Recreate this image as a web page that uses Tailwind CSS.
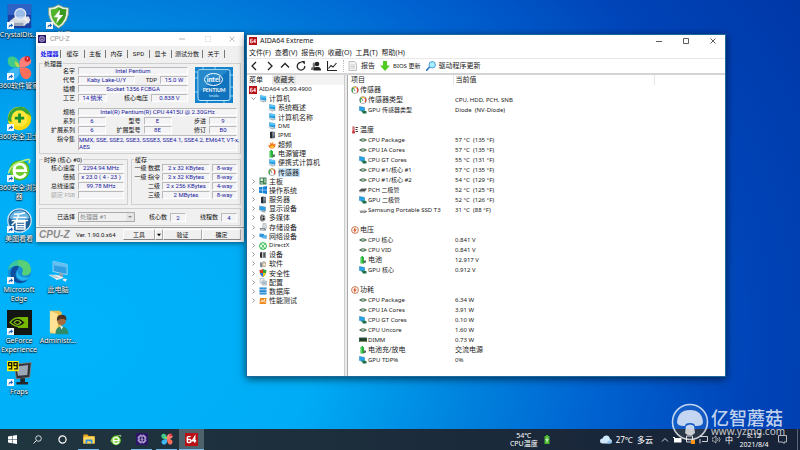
<!DOCTYPE html>
<html lang="zh-CN">
<head>
<meta charset="utf-8">
<meta name="viewport" content="width=device-width, initial-scale=1">
<title>Desktop</title>
<script src="https://cdn.jsdelivr.net/npm/@tailwindcss/browser@4"></script>
</head>
<body class="flex min-h-screen flex-col overflow-hidden bg-[#0050c0] bg-[radial-gradient(ellipse_105%_150%_at_8%_75%,#00b4fb_0%,#00acf5_30%,#0088e0_46%,#0062d0_64%,#0044b8_82%,#0038a8_100%)] font-['Noto_Sans','Noto_Sans_CJK_SC',sans-serif] text-[6px] leading-[10px] text-[#222]">

<svg class="hidden" aria-hidden="true">
  <symbol id="aida" viewBox="0 0 16 16"><rect width="16" height="16" fill="#b80f14"/><path d="M7 4.500H4.200Q2.800 4.500 2.800 6v4.500q0 1.200 1.200 1.200h2q1.200 0 1.200-1.200V9q0-1-1.200-1H3M12 12V4.500L9 9.500h4.800" fill="none" stroke="#fff" stroke-width="1.700"/></symbol>
  <symbol id="pc" viewBox="0 0 16 16"><path d="M3 1l11 2v8L3 9z" fill="#27a3e8" stroke="#1878b8" stroke-width=".8"/><path d="M3 1l11 2v3L3 5z" fill="#5fc8f8"/><path d="M0 11l8-1 8 3-7 2z" fill="#a9b6bf"/><path d="M2 11.500l6-.8 4 2" stroke="#e8eef2" fill="none"/></symbol>
  <symbol id="mon" viewBox="0 0 16 16"><path d="M1 2l12 2v8L1 10z" fill="#2a9fe6" stroke="#6a8ba0"/><path d="M5 12l8 1v2l-8-1z" fill="#8e9ba3"/></symbol>
  <symbol id="gauge" viewBox="0 0 16 16"><circle cx="8" cy="8" r="7" fill="#fff" stroke="#555" stroke-width="1"/><path d="M4 12A5.500 5.500 0 0 1 5 3.500" fill="none" stroke="#30a83a" stroke-width="2.200"/><path d="M5 3.500A5.500 5.500 0 0 1 11 3.500" fill="none" stroke="#e7c42a" stroke-width="2.200"/><path d="M11 3.500A5.500 5.500 0 0 1 12 12" fill="none" stroke="#e23a28" stroke-width="2.200"/><path d="M8 10L5 4" stroke="#333" stroke-width="1.300"/></symbol>
  <symbol id="chip" viewBox="0 0 16 16"><path d="M0 8q8-7 16 0-8 7-16 0z" fill="#3f6b49"/><path d="M4 7.800q4-3 8 0-4 2.600-8 0z" fill="#e9efe6"/></symbol>
  <symbol id="gpu" viewBox="0 0 16 16"><path d="M1 1l10 2v8L1 9z" fill="#27a3e8" stroke="#1b74ae"/><path d="M4 9l11 1v5H8z" fill="#2d7a56"/><circle cx="11" cy="12.500" r="2" fill="#163"/></symbol>
  <symbol id="server" viewBox="0 0 16 16"><path d="M4 2l4-1v14l-4-1z" fill="#252b33"/><path d="M8 1l6 1v12l-6 1z" fill="#5d6873"/><path d="M9 4h4M9 6h4M9 8h4" stroke="#b8c3cc"/></symbol>
  <symbol id="flame" viewBox="0 0 16 16"><path d="M8 15C2 15 1 11 1 7l3 2 1-7 3 4 2-5 1 6 4-2c0 5-1 10-7 10z" fill="#f07818"/><path d="M8 14c-3 0-4-2-3-4l2 1 1-3 2 3 2-1c0 3-1 4-4 4z" fill="#ffd23a"/></symbol>
  <symbol id="batt" viewBox="0 0 16 16"><path d="M5 0h3v2h2v13H3V2h2z" fill="#27b53a"/><path d="M5 3v11" stroke="#8df08a"/><path d="M9 9h5v4l-5 2z" fill="#5b6a60"/></symbol>
  <symbol id="board" viewBox="0 0 16 16"><path d="M1 1h14v14H1z" fill="#3c8052"/><path d="M3 3h5v5H3zM10 3h1v9h-1zM12.500 3h1v9h-1zM3 10h5v1H3zM3 12h5v1H3z" fill="#dcebdc"/></symbol>
  <symbol id="win" viewBox="0 0 16 16"><path d="M0 2.500L7 1.500v6H0zM8 1.300L16 0v7.500H8zM0 8.500h7v6l-7-1zM8 8.500h8V16l-8-1.300z" fill="currentColor"/></symbol>
  <symbol id="media" viewBox="0 0 16 16"><ellipse cx="7" cy="8" rx="5" ry="7" fill="#666"/><ellipse cx="9" cy="8" rx="4" ry="6" fill="#aaa"/><circle cx="9" cy="5" r="1.600" fill="#333"/><circle cx="9" cy="10" r="2.400" fill="#333"/></symbol>
  <symbol id="disk" viewBox="0 0 16 16"><path d="M8 1h6l1 9-8 1z" fill="#d5dadd" stroke="#9aa3a8"/><path d="M1 10h11l2 2v3H3z" fill="#868f94"/><path d="M4 13h6" stroke="#eee"/></symbol>
  <symbol id="net" viewBox="0 0 16 16"><path d="M1 3l9 1v7l-9-1z" fill="#2995dc"/><path d="M7 6l8 1v6l-8-1z" fill="#53b8f0" stroke="#2b7fb8" stroke-width=".7"/></symbol>
  <symbol id="dx" viewBox="0 0 16 16"><circle cx="8" cy="8" r="6.800" fill="#fff" stroke="#17b437" stroke-width="2"/><path d="M3 3q5 3 9 11M13 3q-5 3-9 11" fill="none" stroke="#17b437" stroke-width="1.600"/></symbol>
  <symbol id="dev" viewBox="0 0 16 16"><path d="M2 3l4-1v12l-4-1z" fill="#333"/><path d="M7 2h7v12H7z" fill="#8b949a"/><path d="M9 4h3v8H9z" fill="#555"/></symbol>
  <symbol id="soft" viewBox="0 0 16 16"><path d="M2 5l8-3 4 2v9l-8 2-4-2z" fill="#b7bec4"/><path d="M2 5l4 2v8l-4-2z" fill="#7f898f"/><circle cx="10.500" cy="9" r="3" fill="#f3f3f3" stroke="#d8842c"/></symbol>
  <symbol id="shield" viewBox="0 0 16 16"><path d="M8 0q3 2 7 2 0 9-7 14z" fill="#2fa53a"/><path d="M8 0Q5 2 1 2q0 9 7 14z" fill="#dd3a22"/><path d="M8 8H1.700Q3 13 8 16z" fill="#2277d8"/><path d="M8 8h6.300Q13 13 8 16z" fill="#f4c81e"/></symbol>
  <symbol id="cfg" viewBox="0 0 16 16"><path d="M2 1h8v9H2z" fill="#eef2f5" stroke="#8ba0ae"/><path d="M6 6h9v8H6z" fill="#d4dfe6" stroke="#7b90a0"/><path d="M8 9h5M8 11h5" stroke="#70899b"/></symbol>
  <symbol id="db" viewBox="0 0 16 16"><path d="M1 1h14v4H1zM1 6h14v4H1zM1 11h14v4H1z" fill="#2385d0"/><path d="M1 2h14M1 7h14M1 12h14" stroke="#6cbcf0"/></symbol>
  <symbol id="perf" viewBox="0 0 16 16"><path d="M2 2h13l-1 12H1z" fill="#f08a1c"/><path d="M4 11l2-5 2 4 3-6 1 7" fill="none" stroke="#fff" stroke-width="1.400"/></symbol>
  <symbol id="temp" viewBox="0 0 16 16"><path d="M3 1h4v9q2 2 0 5H3q-2-3 0-5z" fill="#c33030"/><path d="M4.500 2v7" stroke="#fff"/><path d="M9 2h5v2H9zM9 6h4v2H9zM9 10h5v2H9z" fill="#444"/></symbol>
  <symbol id="volt" viewBox="0 0 16 16"><circle cx="8" cy="8" r="6.800" fill="#fff" stroke="#b35a2c" stroke-width="1.600"/><path d="M9 2L4 9h3l-1 5 6-7H8.500z" fill="#e1511b"/></symbol>
  <symbol id="pch" viewBox="0 0 16 16"><path d="M0 9l5-4h11l-4 6H1z" fill="#4e5552"/><path d="M2 11v2M5 11v2M8 11v2M11 11v2" stroke="#777"/></symbol>
  <symbol id="ssd" viewBox="0 0 16 16"><path d="M0 8l13-1 3 3-2 3H3z" fill="#d0d4d6"/><path d="M2 12h12l1-2" stroke="#444" stroke-width="1.800" fill="none"/></symbol>
  <symbol id="dimm" viewBox="0 0 16 16"><path d="M0 3h16v9H0z" fill="#2e5f47"/><path d="M2 5h3v4H2zM6.500 5h3v4h-3zM11 5h3v4h-3z" fill="#18271f"/><path d="M1 11h14" stroke="#c8b96a"/></symbol>
  <symbol id="link" viewBox="0 0 8 8"><path d="M0 0h8v8H0z" fill="#f4f8fc"/><path d="M2 6.800q-.5-3.500 2.500-3.600V1.500L7 4 4.500 6V4.700Q3 4.600 2 6.800z" fill="#1560b8"/></symbol>
  <symbol id="e360" viewBox="0 0 32 32"><circle cx="16" cy="17" r="13" fill="#4fae1a"/><circle cx="16" cy="17" r="12" fill="#72cc30"/><path d="M24 21q-3 5-8 5-7-1-7-9t7-8q8 0 8 8.500H10" fill="none" stroke="#fff" stroke-width="3.600"/><path d="M2 21Q4 8 28 3q2 1 0 5" fill="none" stroke="#b8ee84" stroke-width="2"/></symbol>
  <symbol id="petal" viewBox="0 0 32 32"><path d="M16 16H8Q0 14 1 6q1-5 7-4 8 2 8 14z" fill="#3fc98b"/><path d="M16 16V8q2-6 8-6 7 1 7 7-2 7-15 7z" fill="#ff8078"/><path d="M16 16h8q7 2 7 8-1 7-7 7-8-2-8-15z" fill="#ff6e58"/><path d="M16 16v8q-2 7-8 7-7-1-7-7 2-8 15-8z" fill="#3db7f5"/><path d="M10 8q6 2 6 8-6 0-6-8z" fill="#b7d94d"/><circle cx="26" cy="5" r="3.600" fill="#d3262f"/><path d="M26 3v2.500" stroke="#fff"/></symbol>
  <symbol id="cpuz" viewBox="0 0 16 16"><path d="M0 0h16v16H0z" fill="#2d1668"/><path d="M4 4h8v8H4z" fill="none" stroke="#e7dcff" stroke-width="1.300"/><path d="M6 2v2M8 2v2M10 2v2M6 12v2M8 12v2M10 12v2M2 6h2M2 8h2M2 10h2M12 6h2M12 8h2M12 10h2" stroke="#c7b4f4" stroke-width=".8"/><path d="M8 5.500v4M6.500 8.500L8 10l1.500-1.500" stroke="#fff" fill="none"/></symbol>
  <symbol id="crystal" viewBox="0 0 32 32"><path d="M1 0h30v31H1z" fill="#1d3f9f"/><path d="M1 0h30v14H1z" fill="#2e62c4"/><path d="M3 22l8-6h17l2 5-8 7H5z" fill="#d9dde4"/><path d="M4 24h17v4H6z" fill="#9ea7b5"/><circle cx="17" cy="13" r="7" fill="#b5d3f5" fill-opacity=".8" stroke="#e7edf5" stroke-width="1.500"/><path d="M22 18l6 6" stroke="#eee" stroke-width="2.500"/></symbol>
  <symbol id="guard" viewBox="0 0 32 32"><path d="M16 1q6 4 13 4 1 18-13 26Q2 23 3 5q7 0 13-4z" fill="#e8efe4" stroke="#7d9a72"/><path d="M16 4q5 3 10 3 0 15-10 21Q6 22 6 7q5 0 10-3z" fill="#53b52b"/><path d="M16 4v24q10-6 10-21-5 0-10-3z" fill="#3c9a20"/><path d="M18 7l-8 10h5l-2 8 9-11h-5z" fill="#fff"/></symbol>
  <symbol id="plus" viewBox="0 0 32 32"><circle cx="16" cy="16" r="15" fill="#f6d90c"/><path d="M1 18Q2 2 18 1q10 1 13 13-6-7-14-3-5 3-8 8-5 3-8-1z" fill="#35a53a"/><circle cx="16" cy="16" r="10.500" fill="#ffe63b"/><path d="M16 9.500v12M10 15.500h12" stroke="#17902e" stroke-width="3.600"/></symbol>
  <symbol id="look" viewBox="0 0 32 32"><circle cx="16" cy="16" r="15" fill="#1d5e96" stroke="#cfe9fa" stroke-width="1.600"/><path d="M3 13Q7 3 16 3t13 10q-13 5-26 0z" fill="#67b5e2"/><path d="M9 8q8 0 14-2M8 12h17M6 16h21M15 7q-1 9-9 15M12 18h11v9H12zM12 21h11M12 24h11" fill="none" stroke="#fff" stroke-width="1.900"/></symbol>
  <symbol id="edge" viewBox="0 0 32 32"><circle cx="16" cy="16" r="15" fill="#168fd8"/><path d="M1 15Q3 1 17 1q14 2 14 14-2 7-10 6-3-1-1-4 2-7-6-8Q4 9 1 15z" fill="#39c6a0"/><path d="M14 1q16-1 17 13-1 7-9 7-4-1-2-4 2-7-6-9z" fill="#62d36a" fill-opacity=".75"/><path d="M14 13q-5 4-2 11 5 7 15 3-7 6-15 3-12-7-5-19 3-3 8-2z" fill="#0d4f9e"/><path d="M15 13q-3 4 1 8 5 4 13 2-4 5-10 4-7-1-7-8 0-4 3-6z" fill="#29b5ef"/></symbol>
  <symbol id="thispc" viewBox="0 0 32 32"><path d="M9 3l18 4v13L9 16z" fill="#2f9fe3" stroke="#bfe4f8"/><path d="M9 3l18 4v4L9 8z" fill="#63bff0"/><path d="M17 18l5 1v4h-6z" fill="#8ba0ad"/><path d="M3 20l11 0 9 4-9 3z" fill="#edf4f8"/><path d="M6 21l8 1M8 23l9 1" stroke="#9cb2bf"/><path d="M23 25l4 1-2 3-4-2z" fill="#e8eef1"/></symbol>
  <symbol id="user" viewBox="0 0 32 32"><path d="M5 1h12l3 2v27H5z" fill="#e8bf55"/><path d="M5 1l10 4v26L5 28z" fill="#ffe294"/><circle cx="20" cy="14" r="5.500" fill="#a26c43"/><path d="M14 14q-1-8 6-8t6 7q-6-3-9-1z" fill="#4b3222"/><path d="M12 31q0-10 8-10t9 10z" fill="#2e8b6c"/><path d="M18 21l2 4 2-4z" fill="#fff"/></symbol>
  <symbol id="nv" viewBox="0 0 32 32"><path d="M0 0h32v32H0z" fill="#141614"/><path d="M14 9h13v14H14z" fill="#76b900"/><path d="M4 16q7-9 15-4 4 3 5 4-9 10-20 0z" fill="#141614" stroke="#76b900" stroke-width="2"/><path d="M9 16q4-5 9 0-5 5-9 0z" fill="#141614" stroke="#8fd01c" stroke-width="1.400"/></symbol>
  <symbol id="fraps" viewBox="0 0 32 32"><path d="M9 4l22-2-2 19-17 2z" fill="#30343a" stroke="#888"/><path d="M12 7l15-2-1 13-12 1z" fill="#9ba8b5"/><path d="M17 22h6v5h4v3H12v-3h5z" fill="#25282c"/><path d="M0 0h15v13H0z" fill="#ffef10"/><path d="M6 9V2H2v4h4M13 9V2H9v4h4M2 10h4v-4M9 10h4v-4" fill="none" stroke="#151500" stroke-width="1.700"/></symbol>
  <symbol id="folder" viewBox="0 0 32 32"><path d="M1 4h11l3 4h16v20H1z" fill="#e9a91f"/><path d="M1 10h30v18H1z" fill="#ffd75e"/><path d="M7 28v-9q0-2 2-2h14q2 0 2 2v9h-4v-6H11v6z" fill="#2f8fe0"/></symbol>
</svg>

<main class="relative flex-1">
  <ul id="icons" aria-label="桌面" class="grid w-[78px] auto-rows-[51px] grid-cols-[38px_40px] pt-[4px] text-[7px] leading-[9px] text-white [text-shadow:0_1px_1px_#000,0_0_2px_#000]"></ul>

  <!-- CPU-Z -->
  <section aria-label="CPU-Z" class="absolute left-[36px] top-[32px] flex w-[208px] flex-col bg-[#f0f0f0] px-[3px] pb-px font-['Roboto','Noto_Sans_CJK_SC',sans-serif] text-[6px] leading-[8px] text-[#111] shadow-[0_1px_5px_#0008]">
    <header class="-mx-[3px] flex h-[14px] items-center gap-[4px] bg-white px-[2px]">
      <svg class="size-[8px]"><use href="#cpuz"/></svg>
      <h1 class="flex-1 text-[7px] text-[#999]">CPU-Z</h1>
      <button aria-label="最小化" class="w-[25px]"><svg class="mx-auto size-[6px]" viewBox="0 0 6 6"><path d="M0 3h6" stroke="#999" stroke-width=".7"/></svg></button>
      <button aria-label="最大化" class="w-[20px]"><svg class="mx-auto size-[6px]" viewBox="0 0 6 6"><path d="M.5.5h5v5h-5z" fill="none" stroke="#ddd" stroke-width=".7"/></svg></button>
      <button aria-label="关闭" class="w-[20px]"><svg class="mx-auto size-[6px]" viewBox="0 0 6 6"><path d="M.5.5l5 5M5.500.5l-5 5" stroke="#999" stroke-width=".7"/></svg></button>
    </header>
    <nav class="flex h-[13px] items-center pt-[2px] text-center">
      <button class="w-[22px] border-r border-[#777] font-bold text-[#1c1cf0]">处理器</button>
      <button class="w-[24px] border-r border-[#777]">缓存</button>
      <button class="w-[21px] border-r border-[#777]">主板</button>
      <button class="w-[22px] border-r border-[#777]">内存</button>
      <button class="w-[22px] border-r border-[#777]">SPD</button>
      <button class="w-[22px] border-r border-[#777]">显卡</button>
      <button class="w-[31px] border-r border-[#777]">测试分数</button>
      <button class="w-[22px] border-r border-[#777]">关于</button>
    </nav>
    <fieldset class="mt-px flex min-w-0 flex-col gap-px border border-[#d0d0d0] pb-[2px] pl-px pr-[3px]">
      <legend class="ml-[2px] h-[7px] px-px leading-[7px]">处理器</legend>
      <div class="flex gap-[7px]">
        <div class="flex flex-1 flex-col gap-px">
          <div class="flex gap-[3px]"><span class="w-[34px] text-right">名字</span><output class="flex-1 border border-[#bbb] border-b-white border-r-white bg-[#f4f4f6] text-center leading-[6px] text-[#2222a0]">Intel Pentium</output></div>
          <div class="flex gap-[3px]"><span class="w-[34px] text-right">代号</span><output class="flex-1 border border-[#bbb] border-b-white border-r-white bg-[#f4f4f6] text-center leading-[6px] text-[#2222a0]">Kaby Lake-U/Y</output><span class="w-[19px] text-right">TDP</span><output class="w-[28px] border border-[#bbb] border-b-white border-r-white bg-[#f4f4f6] text-center leading-[6px] text-[#2222a0]">15.0 W</output></div>
          <div class="flex gap-[3px]"><span class="w-[34px] text-right">插槽</span><output class="flex-1 border border-[#bbb] border-b-white border-r-white bg-[#f4f4f6] text-center leading-[6px] text-[#2222a0]">Socket 1356 FCBGA</output></div>
          <div class="flex gap-[3px]"><span class="w-[34px] text-right">工艺</span><output class="w-[29px] border border-[#bbb] border-b-white border-r-white bg-[#f4f4f6] text-center leading-[6px] text-[#2222a0]">14 纳米</output><span class="flex-1 text-right">核心电压</span><output class="w-[37px] border border-[#bbb] border-b-white border-r-white bg-[#f4f4f6] text-center leading-[6px] text-[#2222a0]">0.838 V</output></div>
        </div>
        <svg class="mr-[4px] h-[36px] w-[38px]" viewBox="0 0 38 36" role="img" aria-label="Intel Pentium inside">
          <rect width="38" height="36" fill="#1483cc"/><path d="M0 5h3M0 11h3M0 25h3M35 8h3M35 20h3M35 29h3M8 0v2M20 0v2M29 34v2M12 34v2" stroke="#7fd0f5"/>
          <rect x="3" y="2.500" width="32" height="31" rx="2" fill="#1173bd" stroke="#c0e8fa"/><path d="M3 2.500h32L3 26z" fill="#3aa0dc" fill-opacity=".5"/>
          <ellipse cx="18.500" cy="12.500" rx="9" ry="6" fill="none" stroke="#fff"/><text x="18.500" y="15" text-anchor="middle" font-size="7" font-weight="bold" fill="#fff" font-family="Lato,sans-serif">intel</text>
          <text x="19" y="25" text-anchor="middle" font-size="5" font-weight="bold" fill="#fff" font-family="Lato,sans-serif">PENTIUM</text><text x="19" y="30" text-anchor="middle" font-size="4" fill="#cdeafd" font-family="Lato,sans-serif">inside</text>
        </svg>
      </div>
      <div class="mt-[4px] flex gap-[3px]"><span class="w-[34px] text-right">规格</span><output class="flex-1 border border-[#bbb] border-b-white border-r-white bg-[#f4f4f6] text-center leading-[6px] text-[#2222a0]">Intel(R) Pentium(R) CPU 4415U @ 2.30GHz</output></div>
      <div class="flex gap-[3px]"><span class="w-[34px] text-right">系列</span><output class="w-[28px] border border-[#bbb] border-b-white border-r-white bg-[#f4f4f6] text-center leading-[6px] text-[#2222a0]">6</output><span class="flex-1 text-right">型号</span><output class="w-[28px] border border-[#bbb] border-b-white border-r-white bg-[#f4f4f6] text-center leading-[6px] text-[#2222a0]">E</output><span class="flex-1 text-right">步进</span><output class="w-[28px] border border-[#bbb] border-b-white border-r-white bg-[#f4f4f6] text-center leading-[6px] text-[#2222a0]">9</output></div>
      <div class="flex gap-[3px]"><span class="w-[34px] text-right">扩展系列</span><output class="w-[28px] border border-[#bbb] border-b-white border-r-white bg-[#f4f4f6] text-center leading-[6px] text-[#2222a0]">6</output><span class="flex-1 text-right">扩展型号</span><output class="w-[28px] border border-[#bbb] border-b-white border-r-white bg-[#f4f4f6] text-center leading-[6px] text-[#2222a0]">8E</output><span class="flex-1 text-right">修订</span><output class="w-[28px] border border-[#bbb] border-b-white border-r-white bg-[#f4f4f6] text-center leading-[6px] text-[#2222a0]">B0</output></div>
      <div class="flex gap-[3px]"><span class="w-[34px] shrink-0 text-right">指令集</span><output class="h-[16px] min-w-0 flex-1 whitespace-nowrap border border-[#bbb] border-b-white border-r-white bg-[#f4f4f6] leading-[7px] text-[#2222a0]">MMX, SSE, SSE2, SSE3, SSSE3, SSE4.1, SSE4.2, EM64T, VT-x,<br>AES</output></div>
    </fieldset>
    <div class="mt-[2px] flex gap-[3px]">
      <fieldset class="flex w-[89px] flex-col gap-px border border-[#d0d0d0] pb-[5px] pl-px pr-[3px] pt-px">
        <legend class="ml-[2px] h-[7px] px-px leading-[7px]">时钟 (核心 #0)</legend>
        <div class="flex gap-[3px]"><span class="w-[34px] text-right">核心速度</span><output class="flex-1 border border-[#bbb] border-b-white border-r-white bg-[#f4f4f6] text-center leading-[6px] text-[#2222a0]">2294.94 MHz</output></div>
        <div class="flex gap-[3px]"><span class="w-[34px] text-right">倍频</span><output class="flex-1 border border-[#bbb] border-b-white border-r-white bg-[#f4f4f6] text-center leading-[6px] text-[#2222a0]">x 23.0 ( 4 - 23 )</output></div>
        <div class="flex gap-[3px]"><span class="w-[34px] text-right">总线速度</span><output class="flex-1 border border-[#bbb] border-b-white border-r-white bg-[#f4f4f6] text-center leading-[6px] text-[#2222a0]">99.78 MHz</output></div>
        <div class="flex gap-[3px]"><span class="w-[34px] text-right text-[#aaa]">额定 FSB</span><output class="flex-1 border border-[#bbb] border-b-white border-r-white bg-[#f4f4f6]"></output></div>
      </fieldset>
      <fieldset class="flex flex-1 flex-col gap-px border border-[#d0d0d0] pb-[5px] pr-[3px] pt-px">
        <legend class="ml-[2px] h-[7px] px-px leading-[7px]">缓存</legend>
        <div class="flex gap-[2px]"><span class="flex-1 text-right">一级 数据</span><output class="w-[48px] border border-[#bbb] border-b-white border-r-white bg-[#f4f4f6] text-center leading-[6px] text-[#2222a0]">2 x 32 KBytes</output><output class="w-[25px] border border-[#bbb] border-b-white border-r-white bg-[#f4f4f6] text-center leading-[6px] text-[#2222a0]">8-way</output></div>
        <div class="flex gap-[2px]"><span class="flex-1 text-right">一级 指令</span><output class="w-[48px] border border-[#bbb] border-b-white border-r-white bg-[#f4f4f6] text-center leading-[6px] text-[#2222a0]">2 x 32 KBytes</output><output class="w-[25px] border border-[#bbb] border-b-white border-r-white bg-[#f4f4f6] text-center leading-[6px] text-[#2222a0]">8-way</output></div>
        <div class="flex gap-[2px]"><span class="flex-1 text-right">二级</span><output class="w-[48px] border border-[#bbb] border-b-white border-r-white bg-[#f4f4f6] text-center leading-[6px] text-[#2222a0]">2 x 256 KBytes</output><output class="w-[25px] border border-[#bbb] border-b-white border-r-white bg-[#f4f4f6] text-center leading-[6px] text-[#2222a0]">4-way</output></div>
        <div class="flex gap-[2px]"><span class="flex-1 text-right">三级</span><output class="w-[48px] border border-[#bbb] border-b-white border-r-white bg-[#f4f4f6] text-center leading-[6px] text-[#2222a0]">2 MBytes</output><output class="w-[25px] border border-[#bbb] border-b-white border-r-white bg-[#f4f4f6] text-center leading-[6px] text-[#2222a0]">8-way</output></div>
      </fieldset>
    </div>
    <div class="mt-[3px] flex h-[18px] items-center gap-[3px] border border-[#d0d0d0] pl-px pr-[3px]">
      <label for="sel" class="w-[34px] text-right">已选择</label>
      <div class="relative w-[57px]">
        <select id="sel" disabled class="block h-[10px] w-full appearance-none border border-[#aaa] bg-[#f0f0f0] pl-px text-[6px] leading-[8px] text-[#888] opacity-100"><option>处理器 #1</option></select>
        <svg class="pointer-events-none absolute right-px top-px h-[8px] w-[8px] bg-[#e4e4e4]" viewBox="0 0 8 8"><path d="M2 3h4L4 5z" fill="#888"/></svg>
      </div>
      <span class="flex-1 text-right">核心数</span><output class="w-[16px] border border-[#bbb] border-b-white border-r-white bg-[#f4f4f6] text-center leading-[7px] text-[#2222a0]">2</output>
      <span class="flex-1 text-right">线程数</span><output class="w-[16px] border border-[#bbb] border-b-white border-r-white bg-[#f4f4f6] text-center leading-[7px] text-[#2222a0]">4</output>
    </div>
    <footer class="-mx-[3px] mt-px flex h-[14px] items-center border-t border-[#999] px-[3px]">
      <strong class="w-[37px] font-['Liberation_Sans',sans-serif] text-[10px] italic text-[#8a8a8a]">CPU-Z</strong>
      <span class="flex-1">Ver. 1.90.0.x64</span>
      <button class="h-[11px] w-[32px] border border-white border-b-[#888] border-r-[#aaa]">工具</button>
      <button aria-label="工具菜单" class="h-[11px] w-[8px] border border-white border-b-[#888] border-r-[#aaa]"><svg class="mx-auto size-[4px]" viewBox="0 0 5 5"><path d="M0 1h5L2.500 4z"/></svg></button>
      <button class="h-[11px] w-[39px] border border-white border-b-[#888] border-r-[#aaa]">验证</button>
      <button class="h-[11px] w-[39px] border border-white border-b-[#888] border-r-[#aaa]">确定</button>
    </footer>
  </section>

  <!-- AIDA64 -->
  <section aria-label="AIDA64 Extreme" class="absolute left-[246px] top-[34px] flex h-[343px] w-[480px] flex-col border border-[#1c6a9c] bg-white shadow-[0_2px_8px_#0009]">
    <header class="flex h-[12px] items-center gap-[3px] pl-[2px]">
      <svg class="size-[8px]"><use href="#aida"/></svg>
      <h1 class="flex-1 text-[7px]">AIDA64 Extreme</h1>
      <button aria-label="最小化" class="w-[24px]"><svg class="mx-auto size-[6px]" viewBox="0 0 6 6"><path d="M0 3.500h6" stroke="#333" stroke-width=".8"/></svg></button>
      <button aria-label="最大化" class="w-[24px]"><svg class="mx-auto size-[6px]" viewBox="0 0 6 6"><path d="M.5.500h5v5h-5z" fill="none" stroke="#333" stroke-width=".8"/></svg></button>
      <button aria-label="关闭" class="w-[24px]"><svg class="mx-auto size-[6px]" viewBox="0 0 6 6"><path d="M.5.5l5 5M5.500.5l-5 5" stroke="#333" stroke-width=".8"/></svg></button>
    </header>
    <nav class="flex h-[11px] items-center gap-[4px] pl-[2px] text-[7px]">
      <button>文件(F)</button><button>查看(V)</button><button>报告(R)</button><button>收藏(O)</button><button>工具(T)</button><button>帮助(H)</button>
    </nav>
    <div class="flex h-[17px] items-center border-b-2 border-t border-b-[#d4d4d4] border-t-[#e8e8e8] pl-[2px]">
      <div class="flex w-[88px] justify-between">
        <button aria-label="后退"><svg class="size-[10px]" viewBox="0 0 10 10"><path d="M7 1L3 5l4 4" fill="none" stroke="#222" stroke-width="1.300"/></svg></button>
        <button aria-label="前进"><svg class="size-[10px]" viewBox="0 0 10 10"><path d="M3 1l4 4-4 4" fill="none" stroke="#222" stroke-width="1.300"/></svg></button>
        <button aria-label="向上"><svg class="size-[10px]" viewBox="0 0 10 10"><path d="M1 6.500l4-4 4 4" fill="none" stroke="#222" stroke-width="1.300"/></svg></button>
        <button aria-label="刷新"><svg class="size-[10px]" viewBox="0 0 10 10"><path d="M5.500 1.500A3.800 3.800 0 1 0 8.800 5" fill="none" stroke="#222" stroke-width="1.300"/><path d="M5 0h3.800v3.500z" fill="#222"/></svg></button>
        <button aria-label="用户"><svg class="size-[10px]" viewBox="0 0 10 10"><path d="M0 8q0-2 2-2.500Q1 2 3 1.200L4 3v6H0z" fill="#777"/><circle cx="6" cy="3" r="2.300" fill="#222"/><path d="M2.500 9.500Q2.500 6 5 6h2q3 0 3 3.500z" fill="#222"/></svg></button>
        <button aria-label="图表"><svg class="size-[10px]" viewBox="0 0 10 10"><path d="M.5 0v9.500H10M1.500 7.500l2.500-3 2 1.500L9.500 2" fill="none" stroke="#222" stroke-width="1.100"/></svg></button>
      </div>
      <div class="ml-[6px] h-[12px] border-l border-dotted border-[#bbb]"></div>
      <button class="ml-[4px] flex items-center gap-[3px] text-[7px]"><svg class="size-[10px]" viewBox="0 0 10 10"><path d="M1 .5h5.500l2 2v7H1z" fill="#f2f2f2" stroke="#aaa" stroke-width=".7"/><path d="M2.500 4h4.500M2.500 5.500h4.500M2.500 7h4.500" stroke="#bbb" stroke-width=".6"/></svg>报告</button>
      <button class="ml-[5px] flex items-center gap-[3px]"><svg class="size-[10px]" viewBox="0 0 10 10"><path d="M3 0h4v4.500h3L5 10 0 4.500h3z" fill="#4fcb22"/></svg>BIOS 更新</button>
      <button class="ml-[6px] flex items-center gap-[2px] text-[7px]"><svg class="size-[10px]" viewBox="0 0 10 10"><path d="M0 10l4-4.500" stroke="#2e78c0" stroke-width="1.600"/><circle cx="6.200" cy="3.800" r="3.200" fill="#a9f0fc" stroke="#3b8fd8" stroke-width=".9"/></svg>驱动程序更新</button>
    </div>
    <div class="flex min-h-0 flex-1">
      <aside class="w-[98px] border-r border-[#ccc]">
        <div class="flex h-[10px] bg-[#f3f3f3] text-[7px]"><button class="w-[25px] bg-white pl-[2px] text-left">菜单</button><button class="w-[24px] bg-[#e9e9e9]">收藏夹</button></div>
        <ul id="tree" class="flex h-[220px] flex-col bg-white"></ul>
      </aside>
      <div class="w-[3px] border-r border-[#aaa] bg-[#ececec]"></div>
      <div class="flex-1">
        <table class="w-full table-fixed text-left">
          <thead class="text-[7px]"><tr class="h-[10px]"><th class="w-[105px] border-r border-[#e5e5e5] p-0 pl-[3px] font-normal">项目</th><th class="w-[201px] border-r border-[#e5e5e5] p-0 pl-[2px] font-normal">当前值</th><th aria-label="空" class="p-0"></th></tr></thead>
          <tbody id="rows"></tbody>
        </table>
      </div>
    </div>
  </section>

  <!-- site mark -->
  <div class="pointer-events-none absolute bottom-[-12px] right-[17px] z-10 flex items-center gap-[2px] text-white/75">
    <svg class="size-[38px]" viewBox="0 0 38 38"><circle cx="19" cy="19" r="17.500" fill="#fff" fill-opacity=".08" stroke="currentColor" stroke-width="1.600"/><path d="M6 19Q7 7 19 7t13 12q0 4-7 4h-1q0-3-5-3t-5 3h-1q-7 0-7-4z" fill="currentColor"/><path d="M15 23q4-3 8 0l1 7q-5 5-10 0z" fill="currentColor"/></svg>
    <div class="w-[72px]"><div class="whitespace-nowrap text-[18px] font-medium leading-[18px]">亿智蘑菇</div><div class="whitespace-nowrap text-[10px] leading-[9px]">www.yzmg.com</div></div>
  </div>
</main>

<footer class="flex h-[21px] items-center bg-gradient-to-r from-[#20363f] via-[#1c2c3c] to-[#172238] text-[7px] leading-[9px] text-white">
  <nav class="flex h-full">
    <button aria-label="开始" class="w-[25px]"><svg class="mx-auto size-[9px]"><use href="#win"/></svg></button>
    <button aria-label="搜索" class="w-[25px]"><svg class="mx-auto size-[9px]" viewBox="0 0 9 9"><circle cx="5.500" cy="3.500" r="2.800" fill="none" stroke="#fff" stroke-width=".8"/><path d="M3.500 5.500L.5 8.500" stroke="#fff" stroke-width=".9"/></svg></button>
    <button aria-label="Cortana" class="w-[25px]"><svg class="mx-auto size-[9px]" viewBox="0 0 9 9"><circle cx="4.500" cy="4.500" r="3.600" fill="none" stroke="#fff" stroke-width="1.200"/></svg></button>
    <button aria-label="文件资源管理器" class="mx-[3px] w-[21px] border-b border-[#76b9ed]"><svg class="mx-auto size-[12px]"><use href="#folder"/></svg></button>
    <button aria-label="360浏览器" class="mx-[3px] w-[21px]"><svg class="mx-auto size-[12px]"><use href="#e360"/></svg></button>
    <button aria-label="CPU-Z" class="mx-[2px] w-[21px] border-b border-[#76b9ed]"><svg class="mx-auto size-[12px]"><use href="#cpuz"/></svg></button>
    <button aria-label="360软件管家" class="mx-[2px] w-[21px] border-b border-[#76b9ed]"><svg class="mx-auto size-[12px]"><use href="#petal"/></svg></button>
    <button aria-label="AIDA64" class="w-[25px] border-b border-[#76b9ed] bg-[#4d626b]"><svg class="mx-auto size-[13px]"><use href="#aida"/></svg></button>
  </nav>
  <div class="ml-auto flex items-center">
    <div class="text-center text-[7px] leading-[8px]">54℃<br>CPU温度</div>
    <svg class="ml-[6px] h-[9px] w-[6px]" viewBox="0 0 6 9"><path d="M2 0h2v1h1.500v8H.5V1H2z" fill="#48b82c"/><path d="M3 2.500v5M1.500 4L3 5.500 4.500 4" stroke="#fff" fill="none" stroke-width=".8"/></svg>
    <svg class="ml-[50px] h-[9px] w-[12px]" viewBox="0 0 12 9"><path d="M3 8.500Q0 8.500 0 6t2.500-2.500Q3.500.5 6.500.5T10 4q2 .3 2 2.200T10 8.500z" fill="#cfe8fb"/><path d="M6 8.500q3-4 6-2.500 0 2.500-2 2.500z" fill="#8fc4ee"/></svg>
    <span class="ml-[4px] text-[8px]">27℃&nbsp; 多云</span>
  </div>
  <div class="ml-[8px] flex items-center gap-[4px]">
    <svg class="size-[8px]" viewBox="0 0 8 8"><path d="M1 5.500l3-3 3 3" fill="none" stroke="#fff" stroke-width=".8"/></svg>
    <svg class="size-[9px]" viewBox="0 0 9 9"><path d="M1 3h7.500v4.500H1z" fill="#fff"/><path d="M0 2.500h2" stroke="#fff"/></svg>
    <svg class="size-[9px]" viewBox="0 0 9 9"><path d="M.5 1h6v6h-6z" fill="none" stroke="#fff" stroke-width=".8"/><path d="M5 5h4v4H5z" fill="#ff9412"/></svg>
    <svg class="size-[9px]" viewBox="0 0 9 9"><path d="M1 1.500h7.500v5H3M1 4v4.500" fill="none" stroke="#fff" stroke-width=".8"/></svg>
    <svg class="size-[9px]" viewBox="0 0 9 9"><path d="M0 3h1.500L4 1v7L1.500 6H0zM5.500 3q1 1.500 0 3M7 2q2 2.500 0 5" fill="none" stroke="#ddd" stroke-width=".7"/></svg>
    <span class="text-[8px]">中</span>
  </div>
  <time class="ml-[6px] w-[30px] text-center text-[7px]">8:17<br>2021/8/4</time>
  <button aria-label="通知" class="ml-[9px] mr-[10px]"><svg class="size-[9px]" viewBox="0 0 9 9"><path d="M.5.5h8v6.500H6V8.500L4.500 7h-4z" fill="none" stroke="#ddd" stroke-width=".8"/></svg></button>
  <div class="mr-[2px] h-full border-l border-[#5a6678]"></div>
</footer>

<script>
const icon = (id, cls) => `<svg class="${cls}" aria-hidden="true"><use href="#${id}"/></svg>`;
// Labels written only in Chinese take the larger size
const size = t => /^[\u4e00-\u9fff/]+$/.test(t) ? 'text-[7px]' : 'text-[6px]';

// Desktop shortcuts: row, column, icon, label, shortcut arrow
const desktop = [
  [1,1,'crystal','CrystalDis...',1],[1,2,'guard','360杀毒',1],[2,1,'petal','360软件管家',1],[3,1,'plus','360安全卫士',1],
  [4,1,'e360','360安全浏览<br>器',1],[5,1,'look','美图看看',1],[6,1,'edge','Microsoft<br>Edge',1],[6,2,'thispc','此电脑',0],
  [7,1,'nv','GeForce<br>Experience',1],[7,2,'user','Administr...',0],[8,1,'fraps','Fraps',1]];
document.getElementById('icons').innerHTML = desktop.map(([r,c,i,t,l]) =>
  `<li class="flex flex-col items-center text-center" style="grid-row:${r};grid-column:${c}"><span class="relative mb-px">${icon(i,'size-[25px]')}${l?icon('link','absolute bottom-0 left-0 size-[7px]'):''}</span><span class="whitespace-nowrap">${t}</span></li>`).join('');

// Navigation tree: level, icon, label
const tree = [
  [0,'aida','AIDA64 v5.99.4900'],[1,'pc','计算机'],[2,'pc','系统概述'],[2,'pc','计算机名称'],[2,'pc','DMI'],[2,'server','IPMI'],
  [2,'flame','超频'],[2,'batt','电源管理'],[2,'pc','便携式计算机'],[2,'gauge','传感器'],[1,'board','主板'],[1,'win','操作系统'],
  [1,'server','服务器'],[1,'mon','显示设备'],[1,'media','多媒体'],[1,'disk','存储设备'],[1,'net','网络设备'],[1,'dx','DirectX'],
  [1,'dev','设备'],[1,'soft','软件'],[1,'shield','安全性'],[1,'cfg','配置'],[1,'db','数据库'],[1,'perf','性能测试']];
const pad = ['pl-[2px]','pl-[4px]','pl-[21px]'];
document.getElementById('tree').innerHTML = tree.map(([l,i,t],n) =>
  `<li class="flex flex-1 items-center whitespace-nowrap leading-[9px] ${size(t)} ${pad[l]}">${l===1?`<svg class="mr-[3px] size-[5px]" viewBox="0 0 5 5"><path d="${n===1?'M.5 1.500l2 2 2-2':'M1.500.5l2 2-2 2'}" fill="none" stroke="#777" stroke-width=".8"/></svg>`:''}${icon(i,'mr-[2px] size-[8px] shrink-0 text-[#1683d8]')}<span class="${n===9?'bg-[#cce8ff] pr-px':''}">${t}</span></li>`).join('');

// Sensor readings: level, icon, label, value
const rows = [
  [0,'gauge','传感器',''],[1,'gauge','传感器类型','CPU, HDD, PCH, SNB'],[1,'gpu','GPU 传感器类型','Diode&nbsp; (NV-Diode)'],null,
  [0,'temp','温度',''],[1,'chip','CPU Package','57 °C&nbsp; (135 °F)'],[1,'chip','CPU IA Cores','57 °C&nbsp; (135 °F)'],[1,'gpu','CPU GT Cores','55 °C&nbsp; (131 °F)'],
  [1,'chip','CPU #1/核心 #1','57 °C&nbsp; (135 °F)'],[1,'chip','CPU #1/核心 #2','54 °C&nbsp; (129 °F)'],[1,'pch','PCH 二极管','52 °C&nbsp; (125 °F)'],
  [1,'gpu','GPU 二极管','52 °C&nbsp; (126 °F)'],[1,'ssd','Samsung Portable SSD T3','31 °C&nbsp; (88 °F)'],null,
  [0,'volt','电压',''],[1,'chip','CPU 核心','0.841 V'],[1,'chip','CPU VID','0.841 V'],[1,'batt','电池','12.917 V'],[1,'gpu','GPU 核心','0.912 V'],null,
  [0,'volt','功耗',''],[1,'chip','CPU Package','6.34 W'],[1,'chip','CPU IA Cores','3.91 W'],[1,'gpu','CPU GT Cores','0.10 W'],[1,'chip','CPU Uncore','1.60 W'],
  [1,'dimm','DIMM','0.73 W'],[1,'batt','电池充/放电','交流电源'],[1,'gpu','GPU TDP%','0%']];
document.getElementById('rows').innerHTML = rows.map(r => r
  ? `<tr class="h-[10px]"><td class="p-0"><div class="flex h-[10px] items-center whitespace-nowrap ${size(r[2])} ${r[0]?'pl-[11px]':'pl-[3px]'}">${icon(r[1],'mr-px size-[8px] shrink-0')}<span>${r[2]}</span></div></td><td class="p-0 pl-[2px]" colspan="2"><div class="h-[10px] whitespace-nowrap ${size(r[3])}">${r[3]}</div></td></tr>`
  : '<tr class="h-[10px]"><td class="p-0" colspan="3"></td></tr>').join('');
</script>
</body>
</html>
